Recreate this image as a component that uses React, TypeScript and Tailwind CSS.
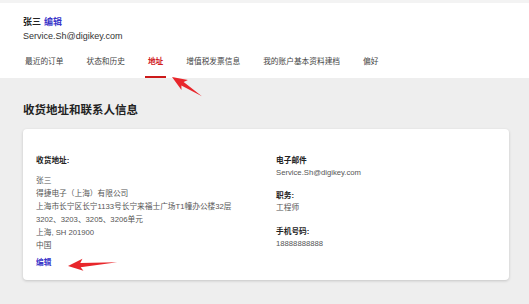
const tabs = ['最近的订单', '状态和历史', '地址', '增值税发票信息', '我的账户基本资料建档', '偏好'];

const font = { fontFamily: '"Liberation Sans", Arial, "Noto Sans CJK SC", sans-serif' };

function Arrow({ x, y, len, angle }: { x: number; y: number; len: number; angle: number }) {
  // 箭头尖端在原点，沿 +x 方向延伸到尾部
  return (
    <polygon
      points={`0,0 15,-6 12.5,-2 ${len},0.2 12.5,2.2 15,6`}
      fill="#e8262b"
      transform={`translate(${x} ${y}) rotate(${angle})`}
    />
  );
}

export default function App() {
  return (
    <div className="relative min-h-[304px] w-[529px] bg-[#eeeeee] flex flex-col text-[#222]" style={font}>
      {/* 页头 */}
      <div className="bg-white border-t-[3px] border-[#f3f3f3] pl-[23px]">
        <div className="mt-[13px] flex items-center gap-[3px] text-[9px] leading-[12px]">
          <span className="font-bold text-[#222]">张三</span>
          <a className="font-bold text-[#3a35c9]">编辑</a>
        </div>
        <div className="mt-[2px] text-[9px] leading-[12px] text-[#333]">Service.Sh@digikey.com</div>
        <div className="mt-[14px] flex gap-[17px] -ml-[1px]">
          {tabs.map((t) => (
            <div
              key={t}
              className={`px-[3px] pb-[8px] text-[7.7px] leading-[12px] border-b-2 ${
                t === '地址' ? 'border-[#cc1a1a] text-[#d0201f] font-bold' : 'border-transparent text-[#444]'
              }`}
            >
              {t}
            </div>
          ))}
        </div>
      </div>

      {/* 内容 */}
      <div className="pl-[23px] pr-[20px] pt-[25px]">
        <h2 className="text-[11.5px] leading-[14px] font-bold text-[#222]">收货地址和联系人信息</h2>
        <div className="mt-[12px] h-[151px] bg-white rounded-[4px] shadow-[0_1px_3px_rgba(0,0,0,0.18)] pl-[13px] pt-[25px] grid grid-cols-[240px_1fr] text-[7.7px]">
          <div>
            <div className="font-bold leading-[13px] text-[#222]">收货地址:</div>
            <div className="mt-[7px] leading-[13px] text-[#555]">
              <div>张三</div>
              <div>得捷电子（上海）有限公司</div>
              <div>上海市长宁区长宁1133号长宁来福士广场T1幢办公楼32层</div>
              <div>3202、3203、3205、3206单元</div>
              <div>上海, SH 201900</div>
              <div>中国</div>
            </div>
            <a className="block mt-[4px] leading-[13px] font-bold text-[#3a35c9]">编辑</a>
          </div>
          <div className="leading-[12px] pt-[0.5px]">
            <div className="font-bold text-[#222]">电子邮件</div>
            <div className="text-[#555]">Service.Sh@digikey.com</div>
            <div className="mt-[11.5px] font-bold text-[#222]">职务:</div>
            <div className="text-[#555]">工程师</div>
            <div className="mt-[11.5px] font-bold text-[#222]">手机号码:</div>
            <div className="text-[#555]">18888888888</div>
          </div>
        </div>
      </div>

      {/* 标注箭头 */}
      <svg className="absolute inset-0 pointer-events-none" width="529" height="304">
        <Arrow x={172} y={77} len={35.5} angle={32.3} />
        <Arrow x={68} y={266} len={49.2} angle={-4.7} />
      </svg>
    </div>
  );
}
